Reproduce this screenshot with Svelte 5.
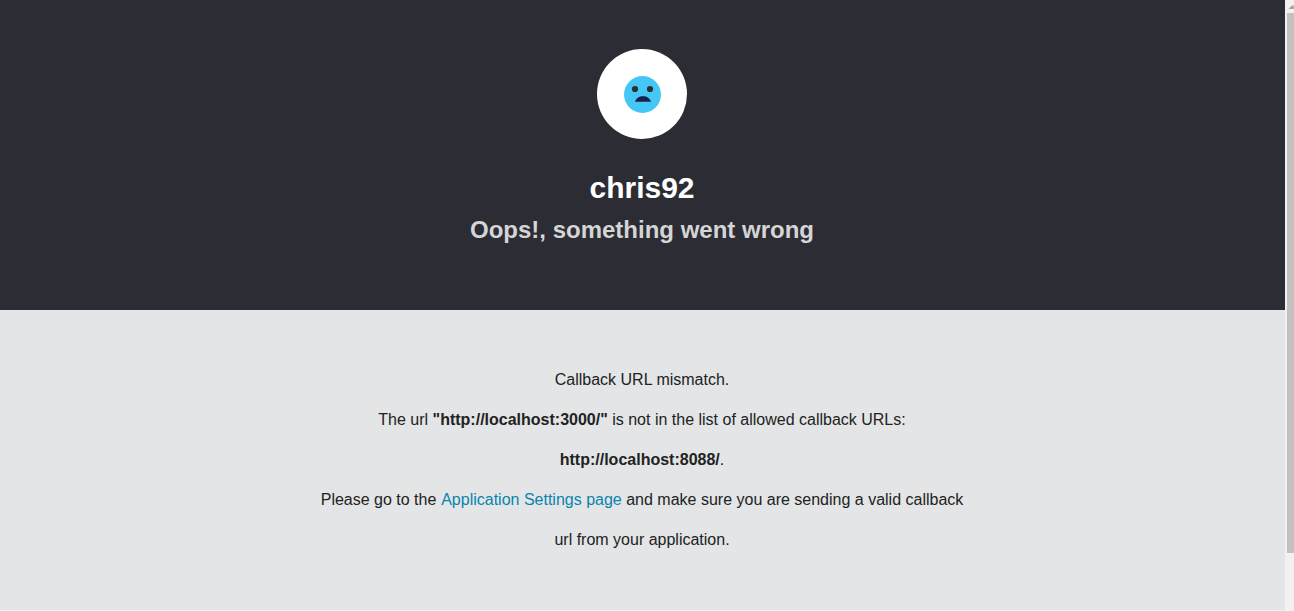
<script>
  const error = {
    tenant: 'chris92',
    summary: 'Oops!, something went wrong',
    rejected: '"http://localhost:3000/"',
    allowed: 'http://localhost:8088/'
  };
</script>

<div class="window">
  <main>
    <header>
      <div class="avatar">
        <svg width="38" height="38" viewBox="0 0 38 38" aria-hidden="true">
          <circle cx="19.5" cy="19.5" r="18.5" fill="#44c7f4" />
          <circle cx="12" cy="14" r="3.1" fill="#2e2e38" />
          <circle cx="27" cy="14" r="3.1" fill="#2e2e38" />
          <path d="M12 26.8C13 23.2 16 21.2 20 21.2S27 23.2 28 26.8Z" fill="#16214d" />
        </svg>
      </div>
      <h1>{error.tenant}</h1>
      <h2>{error.summary}</h2>
    </header>
    <section>
      <p>Callback URL mismatch.</p>
      <p>The url <b>{error.rejected}</b> is not in the list of allowed callback URLs:</p>
      <p><b>{error.allowed}</b>.</p>
      <p>
        Please go to the <a href="#settings">Application Settings page</a> and make sure you are sending a valid callback
        url from your application.
      </p>
    </section>
  </main>
  <div class="scrollbar">
    <svg width="9" height="13" viewBox="0 0 9 13" aria-hidden="true">
      <path d="M3.5 9L7.5 5L11.5 9Z" fill="#a3a3a3" />
    </svg>
    <div class="thumb"></div>
  </div>
</div>

<style>
  :global(body) {
    background: #f0f0f4;
    overflow: hidden;
  }

  .window {
    display: flex;
    height: 611px;
    font-family: 'Liberation Sans', Arial, sans-serif;
  }

  main {
    flex: 1;
    text-align: center;
  }

  header {
    display: flex;
    flex-direction: column;
    align-items: center;
    box-sizing: border-box;
    height: 310px;
    padding: 49px 1px 0 0;
    background: #2c2c34;
  }

  .avatar {
    display: flex;
    align-items: center;
    justify-content: center;
    width: 90px;
    height: 90px;
    border-radius: 50%;
    background: #fff;
  }

  .avatar svg {
    margin: 0 1px 1px 0;
  }

  h1 {
    margin: 31px 0 0;
    color: #fff;
    font-size: 30px;
    line-height: 36px;
  }

  h2 {
    margin: 10px 0 0;
    color: #d5d5d6;
    font-size: 24px;
    line-height: 28px;
  }

  section {
    box-sizing: border-box;
    height: 300px;
    padding: 50px 1px 0 0;
    background: #e3e5e6;
    color: #222;
    font-size: 16px;
    line-height: 40px;
  }

  p {
    width: 660px;
    margin: 0 auto;
  }

  a {
    margin-left: 0.4px;
    color: #0a84ae;
    text-decoration: none;
  }

  .scrollbar {
    width: 9px;
    background: #f1f1f1;
  }

  .scrollbar svg {
    display: block;
  }

  .thumb {
    height: 540px;
    margin-left: 2px;
    background: #c1c1c1;
  }
</style>
